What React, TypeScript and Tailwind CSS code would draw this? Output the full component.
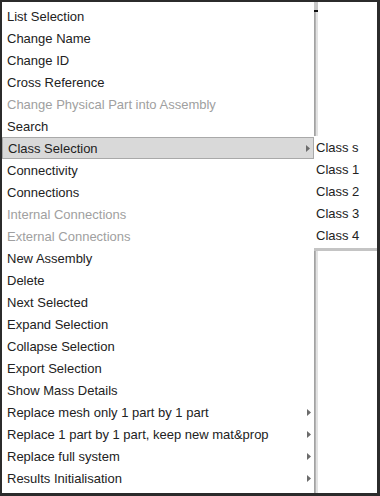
import React from 'react';

// Context menu items; disabled ones render greyed out
const items = [
  { label: 'List Selection' },
  { label: 'Change Name' },
  { label: 'Change ID' },
  { label: 'Cross Reference' },
  { label: 'Change Physical Part into Assembly', disabled: true },
  { label: 'Search' },
  { label: 'Class Selection', sub: true, active: true },
  { label: 'Connectivity' },
  { label: 'Connections' },
  { label: 'Internal Connections', disabled: true },
  { label: 'External Connections', disabled: true },
  { label: 'New Assembly' },
  { label: 'Delete' },
  { label: 'Next Selected' },
  { label: 'Expand Selection' },
  { label: 'Collapse Selection' },
  { label: 'Export Selection' },
  { label: 'Show Mass Details' },
  { label: 'Replace mesh only 1 part by 1 part', sub: true },
  { label: 'Replace 1 part by 1 part, keep new mat&prop', sub: true },
  { label: 'Replace full system', sub: true },
  { label: 'Results Initialisation', sub: true },
];

const classes = ['Class s', 'Class 1', 'Class 2', 'Class 3', 'Class 4'];

function Arrow() {
  return (
    <svg width="4" height="7" viewBox="0 0 4 7" className="shrink-0">
      <path d="M0 0 L4 3.5 L0 7 Z" fill="#6b6b6b" />
    </svg>
  );
}

export default function App() {
  return (
    <div
      className="w-[380px] h-[496px] bg-[#2b2b2b] pt-[2px] pl-[2px] pr-[3px] pb-[3px] text-[13px] leading-none"
      style={{ fontFamily: '"Liberation Sans", Arial, sans-serif' }}
    >
      <div className="relative flex h-full bg-white">
        {/* main menu */}
        <div className="w-[312px] pt-[3px]">
          {items.map((item) => (
            <div
              key={item.label}
              className={`flex h-[22px] items-center justify-between pl-[5px] pr-[3px] ${
                item.active ? 'bg-[#d9d9d9] border border-[#a9a9a9] pl-[4px] pr-[2px]' : ''
              } ${item.disabled ? 'text-[#a0a0a0]' : 'text-[#222]'}`}
            >
              <span className="whitespace-nowrap">{item.label}</span>
              {item.sub && <Arrow />}
            </div>
          ))}
        </div>

        {/* menu edge shadow */}
        <div className="flex w-[4px] flex-col">
          <div className="h-[8px] bg-[#c8c8c8]" />
          <div className="h-[2px] bg-[#111]" />
          <div className="flex flex-1">
            <div className="w-[2px] bg-gradient-to-r from-[#9a9a9a] to-[#bdbdbd]" />
            <div className="w-[2px] bg-[#e2e2e2]" />
          </div>
        </div>

        <div className="flex-1" />

        {/* class submenu */}
        <div className="absolute left-[312px] top-[134px] right-0 bg-white border-b-[3px] border-[#c4c4c4] pb-[2px]">
          {classes.map((c) => (
            <div key={c} className="flex h-[22px] items-center pl-[2px] text-[#222] whitespace-nowrap">
              {c}
            </div>
          ))}
        </div>
      </div>
    </div>
  );
}
